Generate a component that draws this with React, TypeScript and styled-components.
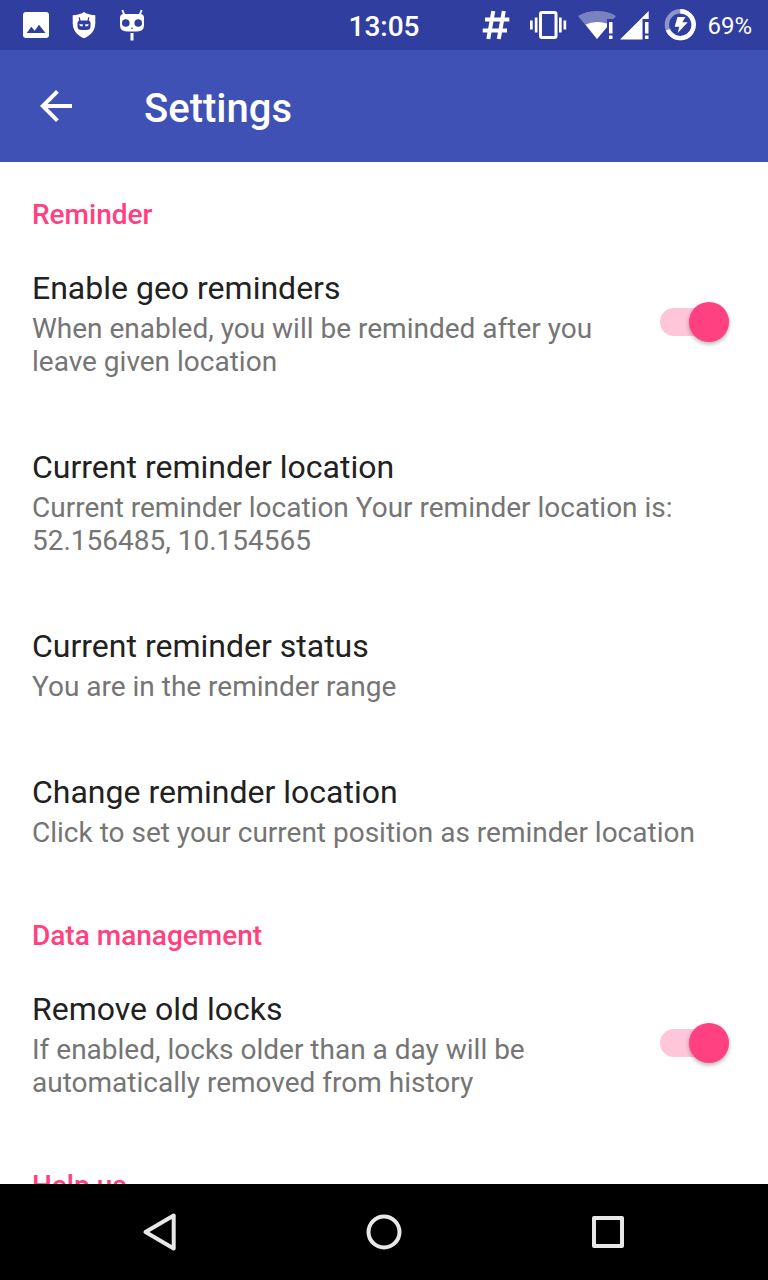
import React, { useState } from "react";
import styled, { createGlobalStyle } from "styled-components";

const GlobalStyle = createGlobalStyle`
  *, *::before, *::after { box-sizing: border-box; }
  body { margin: 0; background: #ffffff; font-family: Roboto, "Liberation Sans", sans-serif; }
  button { font: inherit; color: inherit; background: none; border: 0; padding: 0; text-align: left; cursor: pointer; }
  h1, h2, p { margin: 0; font-weight: 400; }
  svg { display: block; flex: none; }
`;

const Screen = styled.div`
  display: flex;
  flex-direction: column;
  height: 100vh;
`;

const StatusBar = styled.div`
  flex: none;
  display: grid;
  grid-template-columns: 1fr auto 1fr;
  align-items: center;
  height: 50px;
  padding: 0 16px;
  background: #303f9f;
  color: #ffffff;
`;

const StatusGroup = styled.div<{ $end?: boolean }>`
  display: flex;
  align-items: center;
  justify-content: ${(p) => (p.$end ? "flex-end" : "flex-start")};
  gap: ${(p) => (p.$end ? 8 : 16)}px;
  padding-left: 4px;
`;

const Clock = styled.time`
  padding-top: 3px;
  font-size: 28px;
  line-height: 33px;
  font-weight: 500;
`;

const BatteryLevel = styled.span`
  padding-top: 2px;
  font-size: 24px;
  line-height: 28px;
`;

const AppBar = styled.header`
  flex: none;
  display: flex;
  align-items: center;
  gap: 64px;
  height: 112px;
  padding: 0 32px;
  background: #3f51b5;
  color: #ffffff;
`;

const AppTitle = styled.h1`
  padding-top: 6px;
  font-size: 40px;
  line-height: 48px;
  font-weight: 500;
`;

const Content = styled.main`
  flex: 1;
  min-height: 0;
  padding-top: 1px;
  overflow-y: auto;
  scrollbar-width: none;
`;

const SectionTitle = styled.h2`
  padding: 35px 32px 3px;
  font-size: 28px;
  line-height: 33px;
  font-weight: 500;
  color: #ff4081;
`;

const Row = styled.div`
  display: flex;
  align-items: center;
  gap: 24px;
  width: 100%;
  padding: 35px 32px;
`;

const RowText = styled.div`
  flex: 1;
  display: flex;
  flex-direction: column;
  gap: 5px;
`;

const RowTitle = styled.span`
  font-size: 32px;
  line-height: 38px;
  color: #212121;
`;

const RowSummary = styled.span`
  font-size: 28px;
  line-height: 33px;
  color: #757575;
`;

const SwitchBox = styled.label`
  flex: none;
  display: block;
  padding: 0 7px 4px;
  cursor: pointer;
`;

const SwitchTrack = styled.span<{ $on: boolean }>`
  display: flex;
  align-items: center;
  justify-content: ${(p) => (p.$on ? "flex-end" : "flex-start")};
  width: 69px;
  height: 28px;
  margin: 6px 0;
  border-radius: 14px;
  background: ${(p) => (p.$on ? "#ffc5d9" : "#bdbdbd")};
`;

const SwitchThumb = styled.input`
  appearance: none;
  flex: none;
  width: 40px;
  height: 40px;
  margin: 0;
  border-radius: 50%;
  background: #fafafa;
  box-shadow: 0 2px 4px rgba(0, 0, 0, 0.3);
  cursor: pointer;

  &:checked {
    background: #ff4081;
  }
`;

const NavBar = styled.nav`
  flex: none;
  display: flex;
  height: 96px;
  padding: 0 48px;
  background: #000000;
`;

const NavButton = styled.button`
  flex: 1;
  display: flex;
  align-items: center;
  justify-content: center;
`;

const PictureIcon = () => (
  <svg width="32" height="32" viewBox="0 0 32 32" aria-hidden="true">
    <rect x="3" y="3" width="26" height="26" rx="3" fill="#fff" />
    <path d="M6.7 24 11.3 17.7 14.7 21.7 19 15.7 25.5 24Z" fill="#303f9f" />
  </svg>
);

const ShieldIcon = () => (
  <svg width="32" height="32" viewBox="0 0 32 32" aria-hidden="true">
    <path d="M16 3C19 5.2 23 6 27.3 6.2V14C27.3 21.5 22.5 26.8 16 29.2C9.5 26.8 4.7 21.5 4.7 14V6.2C9 6 13 5.2 16 3Z" fill="#fff" />
    <path d="M11.2 8.3 12 12M20.8 8.3 20 12" stroke="#303f9f" strokeWidth="1.2" />
    <path d="M9.5 14Q9.5 11.5 12 11.5H20Q22.5 11.5 22.5 14V17.5Q22.5 21 18.500 21H13.5Q9.5 21 9.5 17.5Z" fill="#303f9f" />
    <path d="M11.3 15.3H14.8V17.3H13Q11.5 17.3 11.3 15.3ZM20.7 15.3H17.2V17.3H19Q20.500 17.3 20.7 15.3Z" fill="#fff" />
  </svg>
);

const MascotIcon = () => (
  <svg width="32" height="32" viewBox="0 0 32 32" aria-hidden="true">
    <path d="M6.3 1 8.5 6.500M25.7 1 23.5 6.500" stroke="#fff" strokeWidth="2" />
    <path d="M8 5H24Q28 5 28 9V16Q28 22.5 21 22.5H11Q4 22.5 4 16V9Q4 5 8 5Z" fill="#fff" />
    <circle cx="9.8" cy="14" r="3.8" fill="#303f9f" />
    <circle cx="22.2" cy="14" r="3.8" fill="#303f9f" />
    <path d="M14.5 18.8H17.5L16 20.3Z" fill="#303f9f" />
    <path d="M14.5 24H17.5V31.500H14.5Z" fill="#fff" />
  </svg>
);

const HashIcon = () => (
  <svg width="40" height="32" viewBox="0 0 40 32" aria-hidden="true">
    <path d="M13.3 2 8.3 30M23.8 2 18.8 30M5 10.5H29.3M2.7 21.5H27" stroke="#fff" strokeWidth="4" />
  </svg>
);

const VibrateIcon = () => (
  <svg width="40" height="32" viewBox="0 0 40 32" aria-hidden="true">
    <rect x="12.5" y="3.5" width="15.5" height="25" rx="1.5" fill="none" stroke="#fff" strokeWidth="3" />
    <path d="M2 11.5H4.7V20.5H2ZM6.8 8.5H9.5V23.5H6.8ZM31 8.5H33.7V23.5H31ZM35.5 11.5H38.2V20.5H35.5Z" fill="#fff" />
  </svg>
);

const NetworkIcon = () => (
  <svg width="80" height="32" viewBox="0 0 80 32" aria-hidden="true">
    <path d="M21 30 2 7Q10 2 21 2T40 7L37.5 10H31V18Z" fill="#fff" fillOpacity="0.35" />
    <path d="M21 30 9.5 15.5Q15 13 21 13 27 13 31 14.5V18Z" fill="#fff" />
    <path d="M33 13H36.5V24.5H33ZM33 26.500H36.5V30H33Z" fill="#fff" />
    <path d="M44 30.5 72.7 2V10H66.5V30.5Z" fill="#fff" />
    <path d="M69 13H72.5V24.5H69ZM69 26.500H72.5V30H69Z" fill="#fff" />
  </svg>
);

const BatteryIcon = () => (
  <svg width="35" height="32" viewBox="0 0 35 32" aria-hidden="true">
    <circle cx="16.3" cy="15.7" r="13.4" fill="none" stroke="#fff" strokeOpacity="0.45" strokeWidth="4.4" />
    <path d="M16.3 2.3A13.4 13.4 0 1 1 3.9 20.7" fill="none" stroke="#fff" strokeWidth="4.4" />
    <path d="M13.5 8H21.5L18.3 13.3H23.7L13.7 24 15.3 17.7H10.7Z" fill="#fff" />
  </svg>
);

const BackArrow = () => (
  <svg width="48" height="48" viewBox="0 0 24 24" aria-hidden="true">
    <path d="M20 11H7.83l5.59-5.59L12 4l-8 8 8 8 1.41-1.41L7.83 13H20z" fill="#fff" />
  </svg>
);

type ItemProps = { title: string; summary: string };

function SwitchItem({ title, summary }: ItemProps) {
  const [on, setOn] = useState(true);
  return (
    <Row>
      <RowText>
        <RowTitle>{title}</RowTitle>
        <RowSummary>{summary}</RowSummary>
      </RowText>
      <SwitchBox>
        <SwitchTrack $on={on}>
          <SwitchThumb
            type="checkbox"
            role="switch"
            aria-label={title}
            checked={on}
            onChange={(e) => setOn(e.target.checked)}
          />
        </SwitchTrack>
      </SwitchBox>
    </Row>
  );
}

function Item({ title, summary, action }: ItemProps & { action?: boolean }) {
  return (
    <Row as={action ? "button" : "div"}>
      <RowText>
        <RowTitle>{title}</RowTitle>
        <RowSummary>{summary}</RowSummary>
      </RowText>
    </Row>
  );
}

export default function App() {
  return (
    <Screen>
      <GlobalStyle />
      <StatusBar>
        <StatusGroup>
          <PictureIcon />
          <ShieldIcon />
          <MascotIcon />
        </StatusGroup>
        <Clock>13:05</Clock>
        <StatusGroup $end>
          <HashIcon />
          <VibrateIcon />
          <NetworkIcon />
          <BatteryIcon />
          <BatteryLevel>69%</BatteryLevel>
        </StatusGroup>
      </StatusBar>
      <AppBar>
        <button aria-label="Back">
          <BackArrow />
        </button>
        <AppTitle>Settings</AppTitle>
      </AppBar>
      <Content>
        <SectionTitle>Reminder</SectionTitle>
        <SwitchItem
          title="Enable geo reminders"
          summary="When enabled, you will be reminded after you leave given location"
        />
        <Item
          title="Current reminder location"
          summary="Current reminder location Your reminder location is: 52.156485, 10.154565"
        />
        <Item title="Current reminder status" summary="You are in the reminder range" />
        <Item
          action
          title="Change reminder location"
          summary="Click to set your current position as reminder location"
        />
        <SectionTitle>Data management</SectionTitle>
        <SwitchItem
          title="Remove old locks"
          summary="If enabled, locks older than a day will be automatically removed from history"
        />
        <SectionTitle>Help us</SectionTitle>
      </Content>
      <NavBar>
        <NavButton aria-label="Back">
          <svg width="40" height="40" viewBox="0 0 40 40" aria-hidden="true">
            <path d="M5.5 20 33.7 3.5V36.500Z" fill="none" stroke="#e8e8e8" strokeWidth="4" strokeLinejoin="round" />
          </svg>
        </NavButton>
        <NavButton aria-label="Home">
          <svg width="40" height="40" viewBox="0 0 40 40" aria-hidden="true">
            <circle cx="20" cy="20" r="15.5" fill="none" stroke="#e8e8e8" strokeWidth="4" />
          </svg>
        </NavButton>
        <NavButton aria-label="Recent apps">
          <svg width="40" height="40" viewBox="0 0 40 40" aria-hidden="true">
            <rect x="6" y="6" width="28" height="28" fill="none" stroke="#e8e8e8" strokeWidth="4" strokeLinejoin="round" />
          </svg>
        </NavButton>
      </NavBar>
    </Screen>
  );
}
